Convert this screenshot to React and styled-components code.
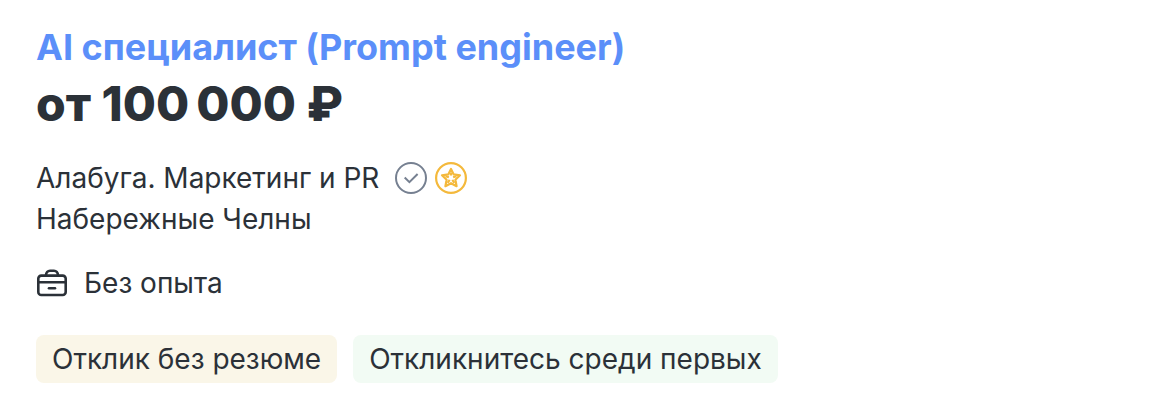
import React from 'react'
import styled, { createGlobalStyle } from 'styled-components'

const GlobalStyle = createGlobalStyle`
body{
    margin:0;
    background:#fff;
    color:#2b3138;
    font-family:Inter, 'Noto Sans', sans-serif;
}
`

const Card = styled.article`
padding:23px 36px 20px;
`

const Title = styled.h2`
margin:0;
font-size:36px;
line-height:48px;
font-weight:700;
`

const TitleLink = styled.a`
color:#5b8ff9;
text-decoration:none;
`

const Salary = styled.p`
margin:0;
font-size:48px;
line-height:66px;
font-weight:800;
`

const Company = styled.div`
display:flex;
align-items:center;
gap:8px;
margin-top:21px;
`

const CompanyLink = styled.a`
margin-right:8px;
color:inherit;
text-decoration:none;
font-size:28px;
line-height:40px;
`

const Text = styled.p`
margin:0;
font-size:28px;
line-height:42px;
`

const Experience = styled.div`
display:flex;
align-items:center;
gap:16px;
margin-top:22px;
`

const Labels = styled.ul`
display:flex;
flex-wrap:wrap;
gap:16px;
margin:31px 0 0;
padding:0;
list-style:none;
`

const Label = styled.li`
padding:4px 16px;
border-radius:8px;
background:${props => props.$color};
font-size:28px;
line-height:40px;
`

const labels = [
    { text: 'Отклик без резюме', color: '#faf6e8' },
    { text: 'Откликнитесь среди первых', color: '#f2fbf4' },
]

const VerifiedIcon = () => (
    <svg width="32" height="32" viewBox="0 0 32 32" fill="none" stroke="#768091" strokeWidth="2" role="img" aria-label="Проверенная компания">
        <circle cx="16" cy="16" r="15" />
        <path d="M9.7 15.5l4.7 4.7 8.2-8.2" />
    </svg>
)

const StarIcon = () => (
    <svg width="32" height="32" viewBox="0 0 32 32" fill="none" stroke="#f4b93c" strokeWidth="2.2" role="img" aria-label="Рейтинг работодателей">
        <circle cx="16" cy="16" r="14.9" />
        <path strokeLinejoin="round" d="M16 6.9l2.7 5.5 6.3.9-4.6 4.4 1.2 6.5-5.6-3-5.6 3 1.2-6.5L7 13.3l6.3-.9z" />
        <path d="M16 10.5v3M10.5 14.2l3.4 1.1M21.5 14.2l-3.4 1.1M12.6 20.8l2.1-2.9M19.4 20.8l-2.1-2.9" />
    </svg>
)

const BriefcaseIcon = () => (
    <svg width="32" height="32" viewBox="0 0 32 32" fill="none" stroke="#2b3138" strokeWidth="2.6" aria-hidden="true">
        <rect x="2.3" y="8.6" width="27.4" height="19.4" rx="3" />
        <path d="M10 8.5c0-3 2-4.8 4-4.8h4c2 0 4 1.8 4 4.8M2 15.3h28" />
        <path strokeLinecap="round" d="M13 21.3h6" />
    </svg>
)

export default function App() {
    return (
        <Card>
            <GlobalStyle />
            <Title><TitleLink href="#vacancy">AI специалист (Prompt engineer)</TitleLink></Title>
            <Salary>от 100&#8239;000 ₽</Salary>
            <Company>
                <CompanyLink href="#company">Алабуга. Маркетинг и PR</CompanyLink>
                <VerifiedIcon />
                <StarIcon />
            </Company>
            <Text>Набережные Челны</Text>
            <Experience>
                <BriefcaseIcon />
                <Text>Без опыта</Text>
            </Experience>
            <Labels>
                {labels.map(label => (
                    <Label key={label.text} $color={label.color}>{label.text}</Label>
                ))}
            </Labels>
        </Card>
    )
}
